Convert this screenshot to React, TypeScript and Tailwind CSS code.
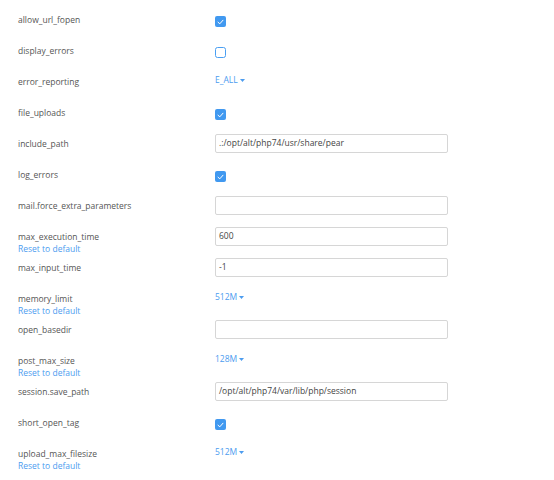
import React from "react";

type Row = {
  name: string;
  kind: "check" | "input" | "select";
  checked?: boolean;
  value?: string;
  reset?: boolean;
};

const rows: Row[] = [
  { name: "allow_url_fopen", kind: "check", checked: true },
  { name: "display_errors", kind: "check", checked: false },
  { name: "error_reporting", kind: "select", value: "E_ALL" },
  { name: "file_uploads", kind: "check", checked: true },
  { name: "include_path", kind: "input", value: ".:/opt/alt/php74/usr/share/pear" },
  { name: "log_errors", kind: "check", checked: true },
  { name: "mail.force_extra_parameters", kind: "input", value: "" },
  { name: "max_execution_time", kind: "input", value: "600", reset: true },
  { name: "max_input_time", kind: "input", value: "-1" },
  { name: "memory_limit", kind: "select", value: "512M", reset: true },
  { name: "open_basedir", kind: "input", value: "" },
  { name: "post_max_size", kind: "select", value: "128M", reset: true },
  { name: "session.save_path", kind: "input", value: "/opt/alt/php74/var/lib/php/session" },
  { name: "short_open_tag", kind: "check", checked: true },
  { name: "upload_max_filesize", kind: "select", value: "512M", reset: true },
];

function Checkbox({ checked }: { checked?: boolean }) {
  if (!checked) {
    return <div className="mt-[12px] h-[11px] w-[11px] rounded-[2.5px] border-[1.5px] border-[#4a9ff2] bg-white" />;
  }
  return (
    <div className="mt-[12px] flex h-[11px] w-[11px] items-center justify-center rounded-[2px] bg-[#4199f0]">
      <svg width="7" height="6" viewBox="0 0 7 6" fill="none">
        <path d="M1 3.2 L2.8 4.8 L6 1.2" stroke="#fff" strokeWidth="1" strokeLinecap="round" strokeLinejoin="round" />
      </svg>
    </div>
  );
}

function Control({ row }: { row: Row }) {
  if (row.kind === "check") return <Checkbox checked={row.checked} />;
  if (row.kind === "select") {
    return (
      <div className="mt-[8px] flex h-[12px] items-center gap-[2px] text-[8.5px] leading-[12px] text-[#4c9cef]">
        <span>{row.value}</span>
        <svg width="5" height="3" viewBox="0 0 5 3">
          <path d="M0 0 H5 L2.5 3 Z" fill="#4c9cef" />
        </svg>
      </div>
    );
  }
  return (
    <div className="mt-[6px] flex h-[19px] w-[233px] items-center rounded-[2px] border border-[#d6d6d6] bg-white px-[3px] text-[8.5px] text-[#444]">
      {row.value}
    </div>
  );
}

export default function App() {
  return (
    <div
      className="min-h-[480px] w-[554px] bg-white pl-[18px] pt-[4px]"
      style={{ fontFamily: '"Open Sans", "Noto Sans", sans-serif' }}
    >
      {rows.map((row) => (
        <div key={row.name} className="flex h-[31px]">
          <div className="w-[197px] pt-[10px] text-[8.5px] leading-[12px]">
            <div className="text-[#555]">{row.name}</div>
            {row.reset && <div className="text-[#4c9cef]">Reset to default</div>}
          </div>
          <Control row={row} />
        </div>
      ))}
    </div>
  );
}
